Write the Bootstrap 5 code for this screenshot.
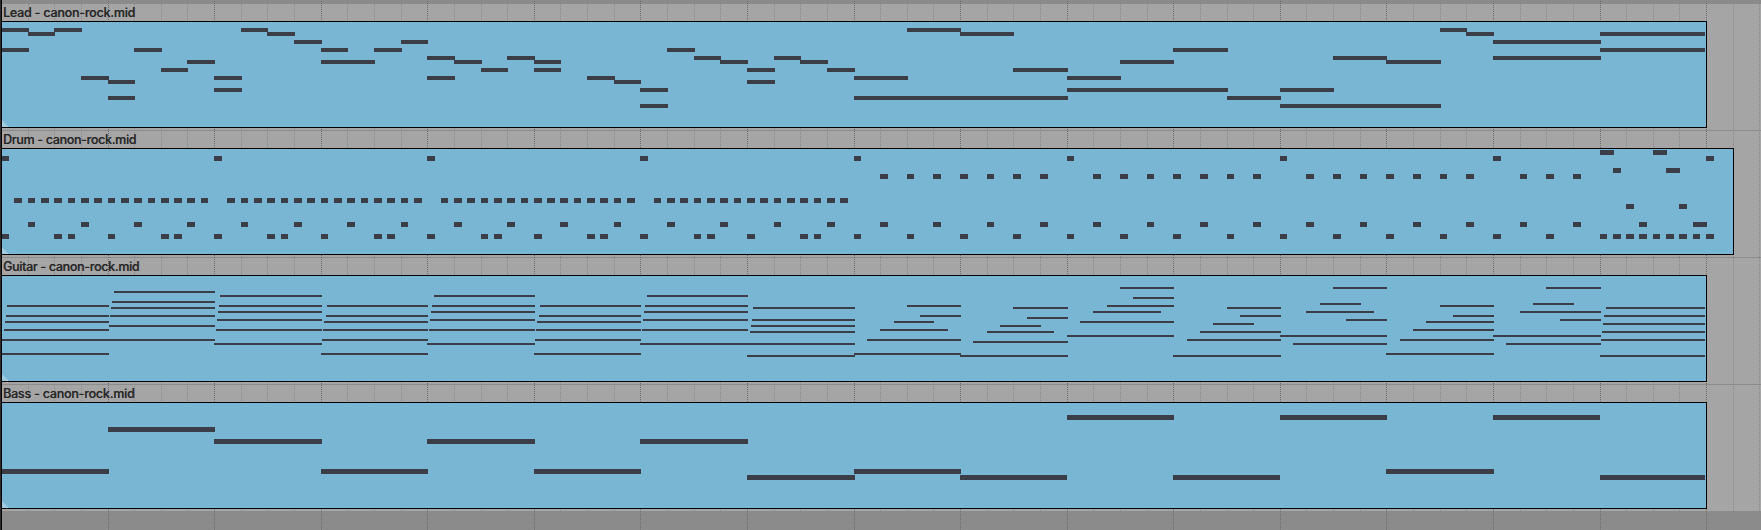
<!DOCTYPE html>
<html lang="en">
<head>
<meta charset="utf-8">
<meta name="viewport" content="width=device-width, initial-scale=1">
<title>Arrangement - canon-rock.mid</title>
<link href="https://cdn.jsdelivr.net/npm/bootstrap@5.3.0/dist/css/bootstrap.min.css" rel="stylesheet">
<style>
  body { background: #8b8b8b; font-family: Inter, "Liberation Sans", sans-serif; }
  .arrangement { height: 530px; padding-top: 4px; }
  .track-lane { height: 127px; background: #a5a5a5; border-bottom: 1px solid #8b8b8b; padding-left: 1px; }
  .clip-title { height: 17px; line-height: 17px; font-size: 12.5px; font-weight: 500; letter-spacing: -.32px; color: #262626; text-shadow: .4px .3px 0 rgba(38, 38, 38, .55); padding-left: 2px; z-index: 1; }
  [data-track="lead"] .clip-title, [data-track="bass"] .clip-title { letter-spacing: -.22px; }
  .clip-body { height: 107px; background: #79b6d4; border: 1px solid #000; z-index: 1; }
  .clip-body svg { display: block; width: 100%; height: 105px; overflow: hidden; }
  .clip-lg { width: 1706px; }
  .clip-xl { width: 1733px; }
  .playhead { left: 0; top: 0; width: 2px; background: linear-gradient(90deg, #2c2c2c 1px, #000 1px); z-index: 2; }
  #grid { z-index: 0; }
  .note-fill { fill: #3b3e46; }
  .corner-fill { fill: #a0cbe0; }
</style>
</head>
<body class="overflow-hidden">
<main class="arrangement position-relative d-flex flex-column overflow-hidden">
  <svg class="position-absolute top-0 start-0 w-100 h-100" id="grid" shape-rendering="crispEdges"></svg>
  <div class="playhead position-absolute h-100"></div>
  <section class="track-lane flex-shrink-0" data-track="lead">
    <div class="clip-title position-relative text-nowrap"><span>Lead - canon-rock.mid</span></div>
    <div class="clip-body clip-lg position-relative"><svg shape-rendering="crispEdges"></svg></div>
  </section>
  <section class="track-lane flex-shrink-0" data-track="drum">
    <div class="clip-title position-relative text-nowrap"><span>Drum - canon-rock.mid</span></div>
    <div class="clip-body clip-xl position-relative"><svg shape-rendering="crispEdges"></svg></div>
  </section>
  <section class="track-lane flex-shrink-0" data-track="guitar">
    <div class="clip-title position-relative text-nowrap"><span>Guitar - canon-rock.mid</span></div>
    <div class="clip-body clip-lg position-relative"><svg shape-rendering="crispEdges"></svg></div>
  </section>
  <section class="track-lane flex-shrink-0" data-track="bass">
    <div class="clip-title position-relative text-nowrap"><span>Bass - canon-rock.mid</span></div>
    <div class="clip-body clip-lg position-relative"><svg shape-rendering="crispEdges"></svg></div>
  </section>
</main>
<script src="https://cdn.jsdelivr.net/npm/bootstrap@5.3.0/dist/js/bootstrap.bundle.min.js"></script>
<script>
  // Time is counted in sixteenths of a bar.
  const STEP = 6.6604875, ORIGIN = 1.505;
  const xAt = u => Math.floor(ORIGIN + u * STEP);
  const LAST = 255.7;

  // Each note: [row, start, end, pixel delay of a strummed string]
  const notes = { lead: [], drum: [], guitar: [], bass: [] };

  // Lead: row -> beat ranges
  const lead = {
    0: '0-1 2-3 9-10 34-36 54-55',
    1: '1-2 10-11 36-38 55-56 60-64',
    3: '11-12 15-16 56-60',
    5: '0-1 5-6 12-13 14-15 25-26 44-46 60-64',
    7: '16-17 19-20 26-27 29-30 50-52 56-60',
    8: '7-8 12-14 17-18 20-21 27-28 30-31 42-44 52-54',
    10: '6-7 18-19 20-21 28-29 31-32 38-40',
    12: '3-4 8-9 16-17 22-23 32-34 40-42',
    13: '4-5 23-24 28-29',
    15: '8-9 24-25 40-46 48-50',
    17: '4-5 32-40 46-48',
    19: '24-25 48-54'
  };
  for (const row in lead)
    for (const span of lead[row].split(' ')) {
      const [a, b] = span.split('-').map(Number);
      notes.lead.push([+row, a * 4, b === 64 ? LAST : b * 4, 0]);
    }

  // Drum
  const hit = (row, u, len = 1) => notes.drum.push([row, u, u + len, 0]);
  for (let u = 0; u <= 256; u += 32) hit(1, u);
  for (let g = 0; g < 128; g += 32) for (let k = 1; k < 16; k++) hit(8, g + k * 2);
  for (let q = 33; q < 60; q++) if (q % 8) hit(4, q * 4);
  for (let q = 1; q < 60; q += 2) hit(12, q * 4);
  for (let b = 0; b < 128; b += 16) [0, 8, 10].forEach(o => hit(14, b + o));
  for (let q = 32; q < 60; q += 2) hit(14, q * 4);
  for (let u = 240; u <= 256; u += 2) hit(14, u);
  hit(0, 240, 2); hit(0, 248, 2); hit(3, 242); hit(3, 250, 2);
  hit(9, 244); hit(9, 252); hit(12, 246); hit(12, 254, 2);

  // Guitar: strummed chords, row+delay per string
  const chords = {
    0: '33+0 26+1 21+3 17+4 14+5 9+6',
    1: '26+0 19+1 14+2 10+3 7+4 2+6',
    2: '28+0 21+2 16+3 12+4 9+5 4+6',
    3: '33+0 26+1 21+2 17+3 14+5 9+6',
    4: '28+0 21+2 16+3 12+4 9+5 4+7',
    5: '33+0 26+1 21+2 17+3 14+5 9+6',
    6: '28+0 21+2 16+3 12+4 9+5 4+7',
    7: '34+0 28+0 22+3 19+4 16+5 10+6',
    15: '34+0 26+1 22+2 18+3 14+4 10+6'
  };
  for (const bar in chords)
    for (const s of chords[bar].split(' ')) {
      const [row, delay] = s.split('+').map(Number);
      notes.guitar.push([row, bar * 16, +bar === 15 ? LAST : bar * 16 + 16, delay]);
    }
  // Guitar: arpeggios, row:start-end inside the bar
  const arps = {
    8: '33:0-16 26:2-16 21:4-14 17:6-12 9:8-16 14:10-16',
    9: '34:0-16 27:2-16 22:4-14 19:6-12 10:8-16 15:10-16',
    10: '24:0-16 17:2-16 12:4-14 9:6-16 0:8-16 5:10-16',
    11: '34:0-16 26:2-16 22:4-16 18:6-12 10:8-16 14:10-16',
    12: '24:0-16 28:2-16 12:4-14 8:6-12 0:8-16 16:10-16',
    13: '33:0-16 26:2-16 21:4-16 17:6-16 9:8-16 14:10-16',
    14: '24:0-16 28:2-16 12:4-16 8:6-12 0:8-16 16:10-16'
  };
  for (const bar in arps)
    for (const s of arps[bar].split(' ')) {
      const [row, a, b] = s.split(/[:-]/).map(Number);
      notes.guitar.push([row, bar * 16 + a, bar * 16 + b, 0]);
    }

  // Bass: one note a bar; bars 9, 11 and 14 are released a little early
  [9, 2, 4, 9, 4, 9, 4, 10, 9, 10, 0, 10, 0, 9, 0, 10].forEach((row, bar) => {
    const early = [9, 11, 14].includes(bar) ? 0.1 : 0;
    notes.bass.push([row, bar * 16, bar === 15 ? LAST : bar * 16 + 16 - early, 0]);
  });

  // First row offset, row pitch and note height of each clip
  const scale = { lead: [6, 4, 4], drum: [1, 6, 5], guitar: [11, 2, 2], bass: [12, 6, 5] };
  document.querySelectorAll('[data-track]').forEach(lane => {
    const name = lane.dataset.track, [top, pitch, h] = scale[name];
    lane.querySelector('svg').innerHTML =
      '<path class="corner-fill" shape-rendering="auto" d="M0 98L7 105H0Z"/>' +
      notes[name].map(([row, a, b, d]) => {
        const x = xAt(a) + d, w = xAt(b) + 1 - x;
        return `<rect class="note-fill" x="${x - 2}" y="${top + row * pitch}" width="${w}" height="${h}"/>`;
      }).join('');
  });

  // Beat lines run through the lanes, bar lines through the whole height
  let lines = '';
  for (let q = 1; q <= 66; q++) {
    const x = xAt(q * 4) + 0.5, bar = q % 4 === 0;
    lines += `<line x1="${x}" x2="${x}" y1="${bar ? 1 : 4}" y2="${bar ? 530 : 511}" stroke="${bar ? '#6c6c6c' : '#8a8a8a'}" stroke-dasharray="1 1"/>`;
  }
  document.getElementById('grid').innerHTML = lines;
</script>
</body>
</html>
